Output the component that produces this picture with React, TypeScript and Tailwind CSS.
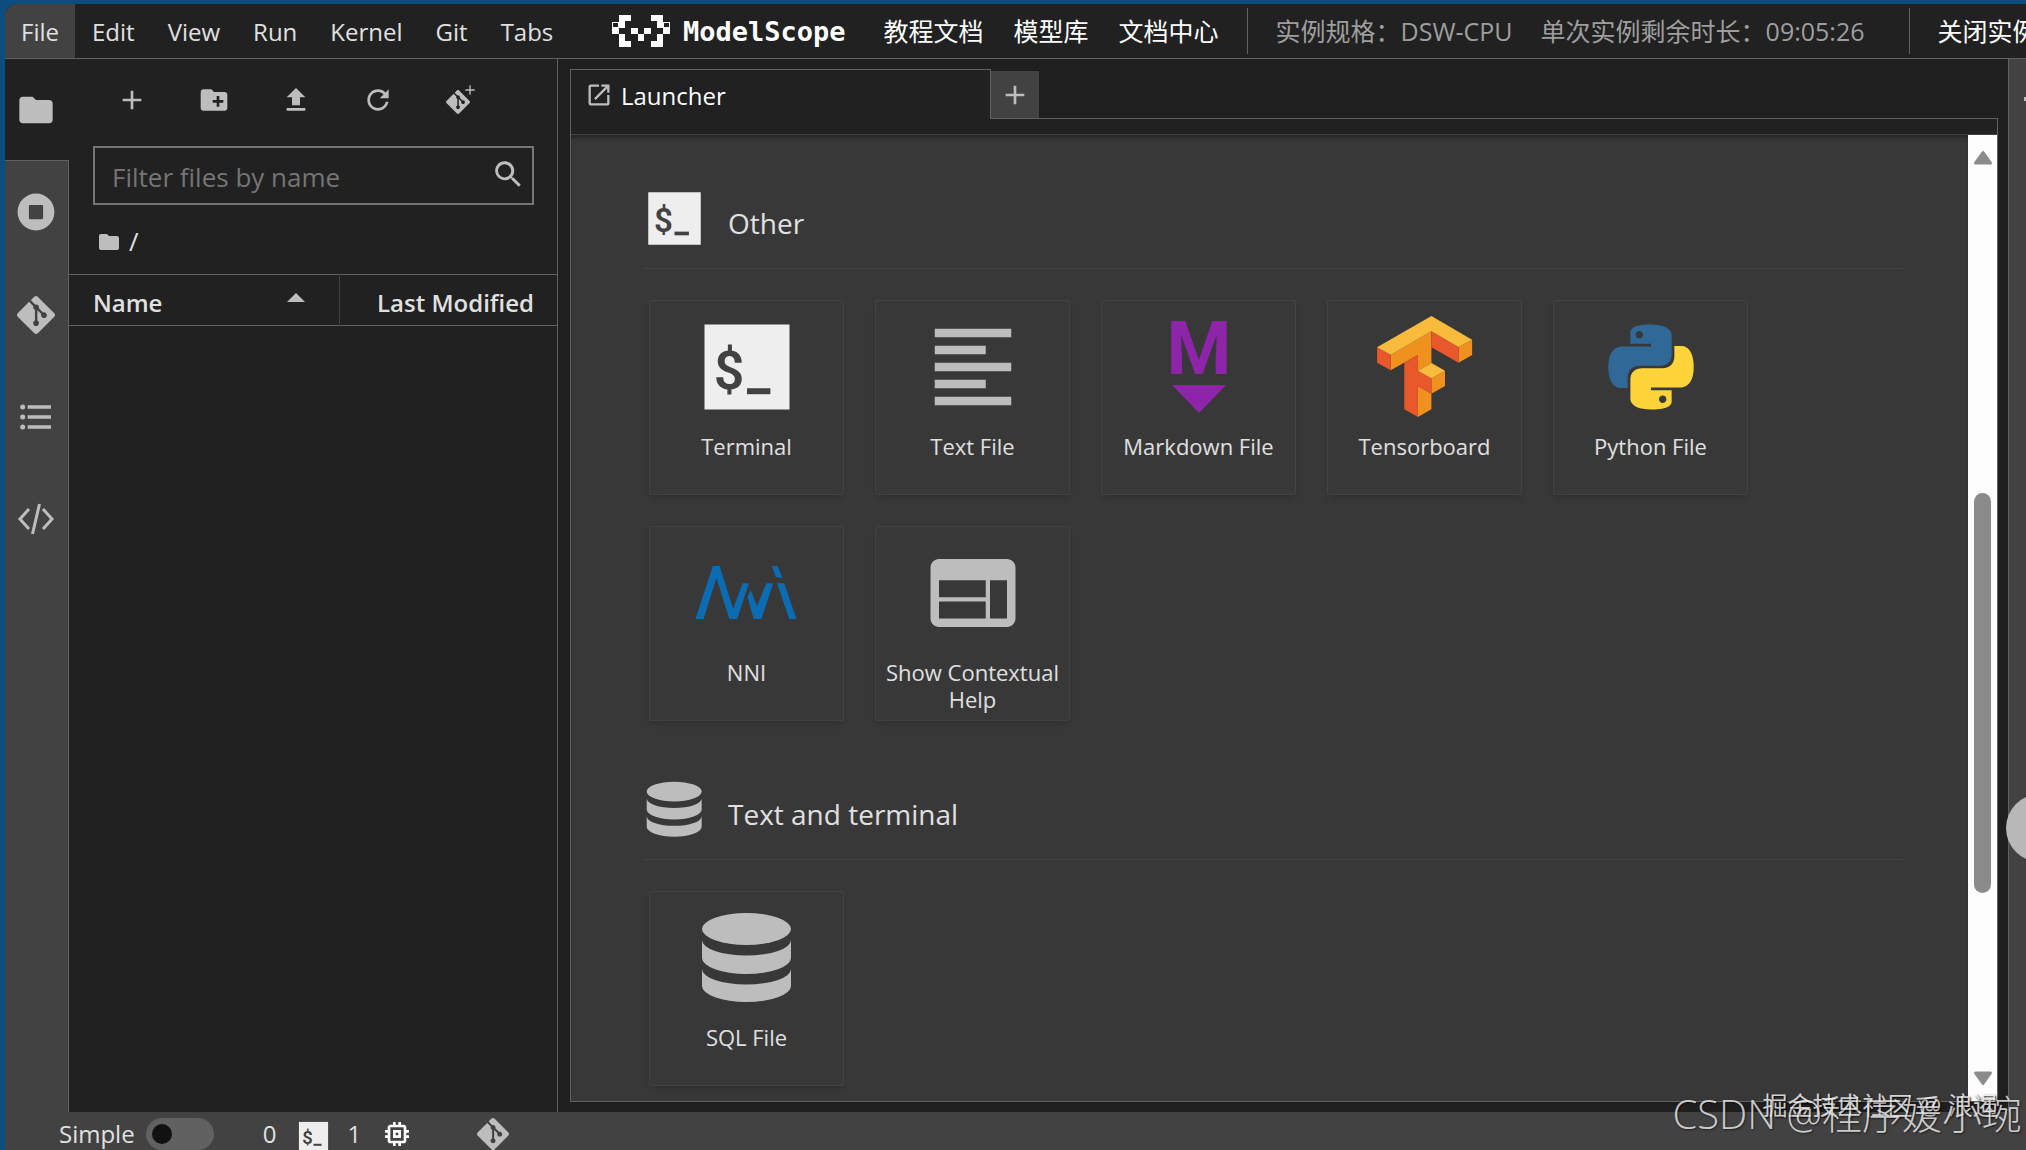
import { useState } from 'react'
import type { ReactNode } from 'react'
import { SiGit } from 'react-icons/si'

const menus = ['File', 'Edit', 'View', 'Run', 'Kernel', 'Git', 'Tabs']
const links = ['教程文档', '模型库', '文档中心']

const FOLDER = 'M10 4H4c-1.1 0-1.99.9-1.99 2L2 18c0 1.1.9 2 2 2h16c1.1 0 2-.9 2-2V8c0-1.1-.9-2-2-2h-8l-2-2z'
const ADD = 'M19 13h-6v6h-2v-6H5v-2h6V5h2v6h6v2z'
const NEW_FOLDER =
  'M20 6h-8l-2-2H4c-1.11 0-1.99.89-1.99 2L2 18c0 1.11.89 2 2 2h16c1.11 0 2-.89 2-2V8c0-1.11-.89-2-2-2zm-1 8h-3v3h-2v-3h-3v-2h3V9h2v3h3v2z'
const UPLOAD = 'M9 16h6v-6h4l-7-7-7 7h4zm-4 2h14v2H5z'
const REFRESH =
  'M9 13.5c-2.49 0-4.5-2.01-4.5-4.5S6.51 4.5 9 4.5c1.24 0 2.36.52 3.17 1.33L10 8h5V3l-1.76 1.76C12.15 3.68 10.66 3 9 3 5.69 3 3.01 5.69 3.01 9S5.69 15 9 15c2.97 0 5.43-2.16 5.9-5h-1.52c-.46 2-2.24 3.5-4.38 3.5z'
const SEARCH =
  'M12.1 10.9h-.7l-.2-.2c.8-.9 1.3-2.2 1.3-3.5 0-3-2.4-5.4-5.4-5.4S1.8 4.2 1.8 7.1s2.4 5.4 5.4 5.4c1.3 0 2.5-.5 3.5-1.3l.2.2v.7l4.1 4.1 1.2-1.2-4.1-4.1zm-5 0c-2.1 0-3.7-1.7-3.7-3.7s1.7-3.7 3.7-3.7 3.7 1.7 3.7 3.7-1.6 3.7-3.7 3.7z'
const RUNNING =
  'M256 8C119 8 8 119 8 256s111 248 248 248 248-111 248-248S393 8 256 8zm96 328c0 8.8-7.2 16-16 16H176c-8.8 0-16-7.2-16-16V176c0-8.8 7.2-16 16-16h160c8.8 0 16 7.2 16 16v160z'
const TOC =
  'M7 5h14v2H7V5m0 8v-2h14v2H7M4 4.5A1.5 1.5 0 0 1 5.5 6 1.5 1.5 0 0 1 4 7.5 1.5 1.5 0 0 1 2.5 6 1.5 1.5 0 0 1 4 4.5m0 6A1.5 1.5 0 0 1 5.5 12 1.5 1.5 0 0 1 4 13.5 1.5 1.5 0 0 1 2.5 12 1.5 1.5 0 0 1 4 10.5M7 19v-2h14v2H7m-3-2.5A1.5 1.5 0 0 1 5.5 18 1.5 1.5 0 0 1 4 19.5 1.5 1.5 0 0 1 2.5 18 1.5 1.5 0 0 1 4 16.5z'
const LAUNCHER =
  'M19 19H5V5h7V3H5a2 2 0 0 0-2 2v14a2 2 0 0 0 2 2h14c1.1 0 2-.9 2-2v-7h-2v7zM14 3v2h3.59l-9.83 9.83 1.41 1.41L19 6.41V10h2V3h-7z'
const KERNEL =
  'M15 9H9v6h6V9zm-2 4h-2v-2h2v2zm8-2V9h-2V7c0-1.1-.9-2-2-2h-2V3h-2v2h-2V3H9v2H7c-1.1 0-2 .9-2 2v2H3v2h2v2H3v2h2v2c0 1.1.9 2 2 2h2v2h2v-2h2v2h2v-2h2c1.1 0 2-.9 2-2v-2h2v-2h-2v-2h2zm-4 6H7V7h10v10z'
const TEXT_FILE = 'M15 15H3v2h12v-2zm0-8H3v2h12V7zM3 13h18v-2H3v2zm0 8h18v-2H3v2zM3 3v2h18V3H3z'
const INSPECTOR =
  'M20 4H4c-1.1 0-1.99.9-1.99 2L2 18c0 1.1.9 2 2 2h16c1.1 0 2-.9 2-2V6c0-1.1-.9-2-2-2zm-5 14H4v-4h11v4zm0-5H4V9h11v4zm5 5h-4V9h4v9z'
const PYTHON_BLUE =
  'M14.25.18l.9.2.73.26.59.3.45.32.34.34.25.34.16.33.1.3.04.26.02.2-.01.13V8.5l-.05.63-.13.55-.21.46-.26.38-.3.31-.33.25-.35.19-.35.14-.33.1-.3.07-.26.04-.21.02H8.77l-.69.05-.59.14-.5.22-.41.27-.33.32-.27.35-.2.36-.15.37-.1.35-.07.32-.04.27-.02.21v3.06H3.17l-.21-.03-.28-.07-.32-.12-.35-.18-.36-.26-.36-.36-.35-.46-.32-.59-.28-.73-.21-.88-.14-1.05-.05-1.23.06-1.22.16-1.04.24-.87.32-.71.36-.57.4-.44.42-.33.42-.24.4-.16.36-.1.32-.05.24-.01h.16l.06.01h8.16v-.83H6.18l-.01-2.75-.02-.37.05-.34.11-.31.17-.28.25-.26.31-.23.38-.2.44-.18.51-.15.58-.12.64-.1.71-.06.77-.04.84-.02 1.27.05zm-6.3 1.98l-.23.33-.08.41.08.41.23.34.33.22.41.09.41-.09.33-.22.23-.34.08-.41-.08-.41-.23-.33-.33-.22-.41-.09-.41.09z'
const PYTHON_YELLOW =
  'M21.04 6.11l.28.06.32.12.35.18.36.27.36.35.35.47.32.59.28.73.21.88.14 1.04.05 1.23-.06 1.23-.16 1.04-.24.86-.32.71-.36.57-.4.45-.42.33-.42.24-.4.16-.36.09-.32.05-.24.02-.16-.01h-8.22v.82h5.84l.01 2.76.02.36-.05.34-.11.31-.17.29-.25.25-.31.24-.38.2-.44.17-.51.15-.58.13-.64.09-.71.07-.77.04-.84.01-1.27-.04-1.07-.14-.9-.2-.73-.25-.59-.3-.45-.33-.34-.34-.25-.34-.16-.33-.1-.3-.04-.25-.02-.2.01-.13v-5.34l.05-.64.13-.54.21-.46.26-.38.3-.32.33-.24.35-.2.35-.14.33-.1.3-.06.26-.04.21-.02.13-.01h5.84l.69-.05.59-.14.5-.21.41-.28.33-.32.27-.35.2-.36.15-.36.1-.35.07-.32.04-.28.02-.21V6.07h2.09l.14.01zm-6.47 14.25l-.23.33-.08.41.08.41.23.33.33.23.41.08.41-.08.33-.23.23-.33.08-.41-.08-.41-.23-.33-.33-.23-.41-.08-.41.08z'

// filled cells of the ModelScope mark, as [column, row]
const logoCells = [
  [1, 0], [2, 0], [6, 0], [7, 0],
  [1, 1], [7, 1],
  [0, 2], [3, 2], [5, 2], [8, 2],
  [1, 3], [4, 3], [7, 3],
  [1, 4], [2, 4], [6, 4], [7, 4],
]

function Icon({ d, className, box = 24 }: { d: string; className: string; box?: number }) {
  return (
    <svg viewBox={`0 0 ${box} ${box}`} className={className} fill="currentColor" aria-hidden="true">
      <path d={d} />
    </svg>
  )
}

function TerminalIcon({ className }: { className: string }) {
  return (
    <svg viewBox="0 0 24 24" className={className} aria-hidden="true">
      <rect x="2" y="2" width="20" height="20" fill="#eee" />
      <text x="4.2" y="17.2" fontSize="12.6" fontWeight="600" fontFamily="Roboto, sans-serif" fill="#424242">
        $
      </text>
      <rect x="12" y="17" width="5.5" height="1.4" fill="#424242" />
    </svg>
  )
}

function MarkdownIcon({ className }: { className: string }) {
  return (
    <svg viewBox="0 0 102 102" className={className} overflow="visible" aria-hidden="true">
      <text x="51" y="58" textAnchor="middle" fontSize="74" fontWeight="700" fontFamily="Roboto, sans-serif" fill="#8e24aa">
        M
      </text>
      <path d="M24 69h54L51 97z" fill="#8e24aa" />
    </svg>
  )
}

function TensorboardIcon({ className }: { className: string }) {
  return (
    <svg viewBox="134 36 102 102" className={className} aria-hidden="true">
      <path d="M150.7 74.7L191.4 51.3V83L177.9 90.7V75L150.7 90.3zM218.6 67L232.1 59.7V75L218.6 82.7zM177.9 106L191.4 113.7V129.3L177.9 137zM191.4 98.3L205 90.7V106L191.4 113.7z" fill="#f0901f" />
      <path d="M137.1 67.3L150.7 74.7V90.3L137.1 82.7zM191.4 51.3L218.6 67V82.7L191.4 67.3zM164.3 82.7L177.9 75V90.7L191.4 98.3V113.7L177.9 106V137L164.3 129.3z" fill="#e8582a" />
      <path d="M191.4 36L137.1 67.3L150.7 74.7L191.4 51.3L218.6 67L232.1 59.7zM191.4 83L205 90.7L191.4 98.3L177.9 90.7z" fill="#f9bb3c" />
    </svg>
  )
}

function PythonIcon({ className }: { className: string }) {
  return (
    <svg viewBox="-2.4 -2.4 28.8 28.8" className={className} aria-hidden="true">
      <path d={PYTHON_BLUE} fill="#306998" />
      <path d={PYTHON_YELLOW} fill="#ffd43b" />
    </svg>
  )
}

function NniIcon({ className }: { className: string }) {
  return (
    <svg viewBox="66 32 102 102" className={className} overflow="visible" fill="#0b6cb3" aria-hidden="true">
      <path d="M65.4 109H73.6L86.4 67.7L99.3 109H107.1L118.9 73.3H112.5L103.2 99L89.6 56H82.9z" />
      <path d="M117.5 87L120.7 80L127 96L136.4 73.3H143.2L131.4 109H123.6z" />
      <path d="M147 73.3H154.3L166.4 109H159.3zM141.8 56H147.5L152.5 68L146 67z" />
    </svg>
  )
}

function DatabaseIcon({ className }: { className: string }) {
  return (
    <svg viewBox="-6 -6 102 102" className={className} fill="#bdbdbd" aria-hidden="true">
      <ellipse cx="44.5" cy="16" rx="44.5" ry="16" />
      <path d="M0 27A44.5 15.5 0 0 0 89 27V45A44.5 16 0 0 1 0 45z" />
      <path d="M0 56A44.5 15.5 0 0 0 89 56V73A44.5 16 0 0 1 0 73z" />
    </svg>
  )
}

function GitCloneIcon() {
  return (
    <span className="relative block size-7">
      <SiGit className="absolute bottom-0 left-0 size-6" />
      <Icon d={ADD} className="absolute -top-1 -right-1 size-4" />
    </span>
  )
}

function ModelScopeLogo() {
  return (
    <a href="#" className="mr-2 flex items-center gap-3 text-white" aria-label="ModelScope">
      <svg viewBox="0 0 9 5" className="h-8 w-[60px]" fill="currentColor" aria-hidden="true" shapeRendering="crispEdges">
        {logoCells.map(([x, y]) => (
          <rect key={`${x}-${y}`} x={x} y={y} width="1" height="1" />
        ))}
        <path d="M.1 1.1h.85v.85H.1zM8.05 1.1h.85v.85h-.85z" fill="none" stroke="currentColor" strokeWidth=".16" />
      </svg>
      <span className="pt-0.5 font-['DejaVu_Sans_Mono',monospace] text-[27px] leading-8 font-bold">ModelScope</span>
    </a>
  )
}

function TopBar() {
  return (
    <header className="flex h-[55px] shrink-0 items-stretch overflow-hidden border-b border-[#616161] text-[24px] whitespace-nowrap">
      <nav className="flex w-[606px] shrink-0 gap-px">
        {menus.map((menu) => (
          <button key={menu} className={`px-4 pt-0.5 ${menu === 'File' ? 'bg-[#424242]' : ''}`}>
            {menu}
          </button>
        ))}
      </nav>
      <div className="flex shrink-0 items-center gap-[30px] pr-7 text-[25px] text-white">
        <ModelScopeLogo />
        {links.map((link) => (
          <a key={link} href="#" className="pt-0.5">
            {link}
          </a>
        ))}
      </div>
      <div className="my-1 flex shrink-0 items-center gap-7 border-x border-[#616161] pt-0.5 pr-11 pl-7 text-[25px] text-[#9e9e9e]">
        <span>实例规格：DSW-CPU</span>
        <span>单次实例剩余时长：09:05:26</span>
      </div>
      <button className="shrink-0 pt-0.5 pl-7 text-[25px] text-white">关闭实例</button>
    </header>
  )
}

function ActivityBar() {
  return (
    <nav className="flex w-16 shrink-0 flex-col text-[#bdbdbd]">
      <button aria-label="File Browser" className="flex h-[101px] items-center justify-center pr-0.5">
        <Icon d={FOLDER} className="size-10" />
      </button>
      <div className="flex flex-1 flex-col border-t border-r border-[#616161] bg-[#424242] pr-px">
        <button aria-label="Running Terminals and Kernels" className="flex h-[102px] items-center justify-center">
          <Icon d={RUNNING} box={512} className="size-[38px]" />
        </button>
        <button aria-label="Git" className="flex h-[103px] items-center justify-center">
          <SiGit className="size-[38px]" />
        </button>
        <button aria-label="Table of Contents" className="flex h-[102px] items-center justify-center">
          <Icon d={TOC} className="size-10" />
        </button>
        <button aria-label="Code Snippets" className="flex h-[102px] items-center justify-center">
          <svg viewBox="0 0 40 40" className="size-10" fill="none" stroke="currentColor" strokeWidth="3" aria-hidden="true">
            <path d="M13 10L4 20L13 30M27 10L36 20L27 30M23.500 5L16.500 35" />
          </svg>
        </button>
      </div>
    </nav>
  )
}

function FileBrowser() {
  const [filter, setFilter] = useState('')
  return (
    <aside className="flex w-[489px] shrink-0 flex-col border-r border-[#616161]">
      <div className="flex h-[87px] items-center pb-1.5 pl-[22px] text-[#bdbdbd]">
        <button aria-label="New Launcher" className="flex w-[82px] justify-center">
          <Icon d={ADD} className="size-8" />
        </button>
        <button aria-label="New Folder" className="flex w-[82px] justify-center">
          <Icon d={NEW_FOLDER} className="size-8" />
        </button>
        <button aria-label="Upload Files" className="flex w-[82px] justify-center">
          <Icon d={UPLOAD} className="size-8" />
        </button>
        <button aria-label="Refresh File List" className="flex w-[82px] justify-center">
          <Icon d={REFRESH} box={18} className="size-8" />
        </button>
        <button aria-label="Git Clone" className="flex w-[82px] justify-center">
          <GitCloneIcon />
        </button>
      </div>
      <label className="mr-[23px] ml-6 flex h-[59px] items-center border-2 border-[#757575] pr-2 pl-[17px]">
        <input
          aria-label="Filter files by name"
          placeholder="Filter files by name"
          value={filter}
          onChange={(e) => setFilter(e.target.value)}
          className="min-w-0 flex-1 bg-transparent pt-1 text-[26px] outline-none placeholder:text-[#757575]"
        />
        <span className="pb-1 text-[#bdbdbd]">
          <Icon d={SEARCH} box={18} className="size-8" />
        </span>
      </label>
      <div className="flex h-[69px] items-center gap-2 pt-1 pl-7 text-[26px]">
        <Icon d={FOLDER} className="size-6 text-[#bdbdbd]" />
        <span>/</span>
      </div>
      <table className="w-full text-[24px] leading-8 font-semibold">
        <thead>
          <tr className="h-[51px] border-y border-[#616161]">
            <th className="border-r border-[#424242] p-0 pt-1.5 pr-[34px] pl-6 font-semibold">
              <span className="flex items-center justify-between">
                Name
                <span className="pb-3 text-[#bdbdbd]">
                  <svg viewBox="0 0 18 9" className="h-[9px] w-[18px]" fill="currentColor" aria-hidden="true">
                    <path d="M0 9L9 0l9 9z" />
                  </svg>
                </span>
              </span>
            </th>
            <th className="w-[218px] p-0 pt-1.5 pr-[23px] text-right font-semibold">Last Modified</th>
          </tr>
        </thead>
      </table>
    </aside>
  )
}

function Card({ label, children }: { label: string; children: ReactNode }) {
  return (
    <button className="flex size-[195px] flex-col items-center rounded-xs border border-[#424242] pt-[15px] text-[22px] leading-[27px] shadow-md">
      {children}
      <span className="mt-[15px] px-1">{label}</span>
    </button>
  )
}

function Section({ title, icon, children }: { title: string; icon: ReactNode; children: ReactNode }) {
  return (
    <section className="mb-[57px]">
      <div className="flex items-center gap-[22px] border-b border-[#424242] pb-[18px]">
        {icon}
        <h2 className="pt-2 text-[28px] leading-10">{title}</h2>
      </div>
      <div className="mt-[31px] flex flex-wrap gap-[31px] pl-1.5">{children}</div>
    </section>
  )
}

function Launcher() {
  return (
    <div className="min-w-0 flex-1 overflow-hidden bg-[#383838] pt-13 pr-[66px] pl-[72px] shadow-[inset_0_4px_4px_-2px_#212121]">
      <Section title="Other" icon={<TerminalIcon className="size-[63px]" />}>
        <Card label="Terminal">
          <TerminalIcon className="size-[102px] shrink-0" />
        </Card>
        <Card label="Text File">
          <Icon d={TEXT_FILE} className="size-[102px] shrink-0 text-[#bdbdbd]" />
        </Card>
        <Card label="Markdown File">
          <MarkdownIcon className="size-[102px] shrink-0" />
        </Card>
        <Card label="Tensorboard">
          <TensorboardIcon className="size-[102px] shrink-0" />
        </Card>
        <Card label="Python File">
          <PythonIcon className="size-[102px] shrink-0" />
        </Card>
        <Card label="NNI">
          <NniIcon className="size-[102px] shrink-0" />
        </Card>
        <Card label="Show Contextual Help">
          <Icon d={INSPECTOR} className="size-[102px] shrink-0 text-[#bdbdbd]" />
        </Card>
      </Section>
      <Section title="Text and terminal" icon={<DatabaseIcon className="size-[63px]" />}>
        <Card label="SQL File">
          <DatabaseIcon className="size-[102px] shrink-0" />
        </Card>
      </Section>
    </div>
  )
}

function ScrollBar() {
  return (
    <div className="flex w-[29px] shrink-0 flex-col items-center bg-[#fdfdfd] pt-[15px] pb-[15px] text-[#8b8b8b]">
      <svg viewBox="0 0 20 15" className="h-[15px] w-5" fill="currentColor" stroke="currentColor" strokeWidth="3" strokeLinejoin="round" aria-hidden="true">
        <path d="M10 2.500L17.500 13H2.500z" />
      </svg>
      <div className="flex w-[17px] flex-1 flex-col pb-[178px]">
        <div className="flex-[328]" />
        <div className="flex-[400] rounded-full bg-[#8b8b8b]" />
      </div>
      <svg viewBox="0 0 20 15" className="h-[15px] w-5" fill="currentColor" stroke="currentColor" strokeWidth="3" strokeLinejoin="round" aria-hidden="true">
        <path d="M10 12.500L17.500 2H2.500z" />
      </svg>
    </div>
  )
}

function DockPanel() {
  return (
    <main className="flex min-w-0 flex-1 flex-col bg-[#1f1f1f] pt-2.5 pr-2.5 pb-2.5 pl-3">
      <div className="flex h-[50px] shrink-0">
        <div className="flex w-[421px] items-center gap-2 border-t border-x border-[#616161] bg-[#212121] pl-3.5 text-[24px] text-white">
          <Icon d={LAUNCHER} className="size-7 text-[#bdbdbd]" />
          <span className="pt-0.5">Launcher</span>
        </div>
        <div className="flex flex-1 border-b border-[#616161]">
          <button aria-label="New Launcher" className="mt-0.5 flex w-12 items-center justify-center bg-[#424242] text-[#bdbdbd]">
            <Icon d={ADD} className="size-8" />
          </button>
        </div>
      </div>
      <div className="flex min-h-0 flex-1 flex-col border-x border-b border-[#616161]">
        <div className="h-4 shrink-0 border-b border-[#424242] bg-[#212121]" />
        <div className="flex min-h-0 flex-1">
          <Launcher />
          <ScrollBar />
        </div>
      </div>
    </main>
  )
}

function StatusBar() {
  const [simple, setSimple] = useState(false)
  return (
    <footer className="flex h-[38px] shrink-0 items-end bg-[#424242] pl-[54px] text-[24px] leading-8">
      <label className="flex items-end gap-[11px]">
        Simple
        <input type="checkbox" role="switch" checked={simple} onChange={(e) => setSimple(e.target.checked)} className="peer sr-only" />
        <span className="flex h-8 w-[68px] items-center rounded-full bg-[#616161] px-1.5 peer-checked:justify-end">
          <span className="size-5 rounded-full bg-[#111]" />
        </span>
      </label>
      <button className="ml-[49px] flex items-end gap-5">
        <span>0</span>
        <TerminalIcon className="-mb-1 size-[35px]" />
        <span className="-ml-1">1</span>
        <Icon d={KERNEL} className="size-8 text-white" />
      </button>
      <button aria-label="Git" className="ml-16 text-[#bdbdbd]">
        <SiGit className="size-8" />
      </button>
    </footer>
  )
}

export default function App() {
  return (
    <div className="relative h-screen overflow-hidden bg-[#0a4d7e] pt-1 pl-[5px] font-['Open_Sans','Noto_Sans_CJK_SC',sans-serif] text-[#e0e0e0]">
      <div className="flex h-full flex-col overflow-hidden rounded-tl-xl bg-[#212121]">
        <TopBar />
        <div className="flex min-h-0 flex-1">
          <ActivityBar />
          <FileBrowser />
          <DockPanel />
          <div className="flex w-[18px] shrink-0 justify-end overflow-hidden border-l border-[#616161] bg-[#424242] pt-[38px]">
            <span className="h-1 w-0.5 bg-[#bdbdbd]" />
          </div>
        </div>
        <StatusBar />
      </div>
      <div className="absolute top-[794px] -right-12 size-[68px] rounded-full bg-[#b8b8b8]" />
      <p className="absolute right-7 bottom-[27px] text-[25px] leading-9 text-white/80 [text-shadow:1px_1px_2px_#000]">
        掘金技术社区 @ 浪遏
      </p>
      <p className="absolute right-1 bottom-2 text-[40px] leading-[56px] font-light whitespace-nowrap text-white/75 [text-shadow:1px_1px_2px_#0008]">
        CSDN @程序媛小琬
      </p>
    </div>
  )
}
